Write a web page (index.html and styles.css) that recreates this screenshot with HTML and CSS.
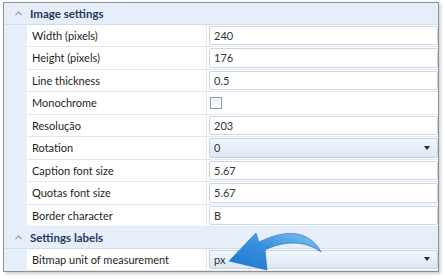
FILE: index.html
```html
<!DOCTYPE html>
<html>
<head>
<meta charset="utf-8">
<link rel="stylesheet" href="styles.css">
</head>
<body>
<div class="frame">
  <div class="section"><span class="caret"><svg width="7" height="5" viewBox="0 0 7 5"><path d="M0.5 4 L3.5 1 L6.5 4" fill="none" stroke="#8c9bb0" stroke-width="1.1"/></svg></span><span class="title">Image settings</span></div>
  <div class="row"><div class="gutter"></div><div class="label">Width (pixels)</div><div class="value"><div class="box">240</div></div></div>
  <div class="row"><div class="gutter"></div><div class="label">Height (pixels)</div><div class="value"><div class="box">176</div></div></div>
  <div class="row"><div class="gutter"></div><div class="label">Line thickness</div><div class="value"><div class="box">0.5</div></div></div>
  <div class="row"><div class="gutter"></div><div class="label">Monochrome</div><div class="value"><div class="plain"><span class="check"></span></div></div></div>
  <div class="row"><div class="gutter"></div><div class="label">Resolução</div><div class="value"><div class="box">203</div></div></div>
  <div class="row"><div class="gutter"></div><div class="label">Rotation</div><div class="value"><div class="box combo"><span>0</span><span class="drop"></span></div></div></div>
  <div class="row"><div class="gutter"></div><div class="label">Caption font size</div><div class="value"><div class="box">5.67</div></div></div>
  <div class="row"><div class="gutter"></div><div class="label">Quotas font size</div><div class="value"><div class="box">5.67</div></div></div>
  <div class="row"><div class="gutter"></div><div class="label">Border character</div><div class="value"><div class="box">B</div></div></div>
  <div class="section"><span class="caret"><svg width="7" height="5" viewBox="0 0 7 5"><path d="M0.5 4 L3.5 1 L6.5 4" fill="none" stroke="#8c9bb0" stroke-width="1.1"/></svg></span><span class="title">Settings labels</span></div>
  <div class="row"><div class="gutter"></div><div class="label">Bitmap unit of measurement</div><div class="value"><div class="box combo"><span>px</span><span class="drop"></span></div></div></div>
  <svg class="arrow" width="110" height="50" viewBox="0 0 110 50">
    <defs>
      <linearGradient id="ag" x1="0" y1="1" x2="1" y2="0">
        <stop offset="0" stop-color="#1d74cc"/>
        <stop offset="0.5" stop-color="#3690de"/>
        <stop offset="1" stop-color="#82c6f3"/>
      </linearGradient>
    </defs>
    <path d="M8 35 L35 7 L38 16 C52 9 66 6 76 8 C88 10 96 18 100 26 C92 20 82 17 72 17 C62 17 52 20 44 24 L46 44 Z" fill="url(#ag)" stroke="#1b6cc0" stroke-width="0.6" stroke-linejoin="round"/>
  </svg>
</div>
</body>
</html>
```
FILE: styles.css
```css
html, body {
  margin: 0;
  padding: 0;
  background: #ffffff;
}
body {
  width: 445px;
  height: 279px;
  overflow: hidden;
  font-family: Lato, "Noto Sans", sans-serif;
  font-size: 11px;
  color: #1e1e1e;
}
.frame {
  position: relative;
  margin: 2px 0 0 3px;
  width: 434px;
  height: 268px;
  border: 1px solid #8d9197;
  background: #e6eefa;
  box-shadow: 2px 2px 3px rgba(0,0,0,0.18);
  display: flex;
  flex-direction: column;
}
.section {
  height: 21.5px;
  display: flex;
  align-items: center;
  border-bottom: 1px solid #d3dced;
  box-sizing: border-box;
}
.caret {
  width: 26px;
  display: flex;
  justify-content: center;
  padding-left: 2px;
  box-sizing: border-box;
}
.title {
  font-weight: bold;
  color: #1f3a63;
  font-size: 11.5px;
}
.row {
  height: 22.5px;
  display: flex;
}
.gutter {
  width: 23px;
  flex: none;
}
.label {
  width: 180px;
  flex: none;
  background: #ffffff;
  border-bottom: 1px solid #e1e8f3;
  border-right: 1px solid #e1e8f3;
  box-sizing: border-box;
  padding-left: 5px;
  display: flex;
  align-items: center;
}
.value {
  flex: 1;
  background: #ffffff;
  border-bottom: 1px solid #e1e8f3;
  box-sizing: border-box;
  padding: 1px 0 1px 2px;
  display: flex;
}
.box {
  flex: 1;
  border: 1px solid #cad6e8;
  border-radius: 2px;
  background: #ffffff;
  display: flex;
  align-items: center;
  padding-left: 4px;
  color: #333333;
}
.plain {
  flex: 1;
  display: flex;
  align-items: center;
  padding-left: 1px;
}
.check {
  width: 10px;
  height: 10px;
  border: 1px solid #8f9cb0;
  background: linear-gradient(#e9eef6, #ffffff);
  box-shadow: inset 0 0 0 1px #ffffff;
}
.combo {
  justify-content: space-between;
  background: linear-gradient(#f2f6fc, #dde7f4);
  border-color: #c3d1e6;
}
.drop {
  width: 0;
  height: 0;
  border-left: 3.5px solid transparent;
  border-right: 3.5px solid transparent;
  border-top: 4px solid #2a2a2a;
  margin-right: 7px;
}
.arrow {
  position: absolute;
  left: 217px;
  top: 223px;
}
```
